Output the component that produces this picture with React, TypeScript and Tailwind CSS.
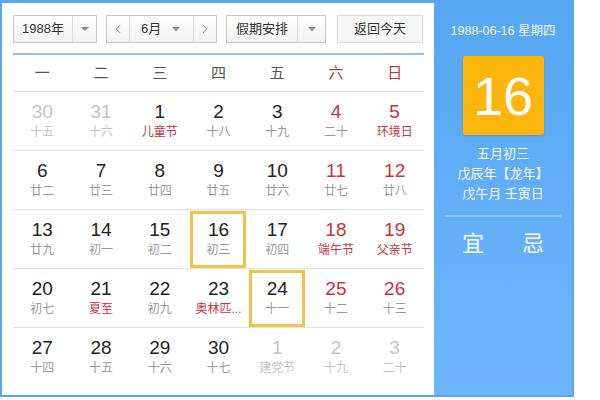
import { ChevronLeft, ChevronRight } from "lucide-react";

type Day = {
  n: number;
  lunar: string;
  dim?: boolean;
  redNum?: boolean;
  redLunar?: boolean;
  selected?: boolean;
};

const weeks: Day[][] = [
  [
    { n: 30, lunar: "十五", dim: true },
    { n: 31, lunar: "十六", dim: true },
    { n: 1, lunar: "儿童节", redLunar: true },
    { n: 2, lunar: "十八" },
    { n: 3, lunar: "十九" },
    { n: 4, lunar: "二十", redNum: true },
    { n: 5, lunar: "环境日", redNum: true, redLunar: true },
  ],
  [
    { n: 6, lunar: "廿二" },
    { n: 7, lunar: "廿三" },
    { n: 8, lunar: "廿四" },
    { n: 9, lunar: "廿五" },
    { n: 10, lunar: "廿六" },
    { n: 11, lunar: "廿七", redNum: true },
    { n: 12, lunar: "廿八", redNum: true },
  ],
  [
    { n: 13, lunar: "廿九" },
    { n: 14, lunar: "初一" },
    { n: 15, lunar: "初二" },
    { n: 16, lunar: "初三", selected: true },
    { n: 17, lunar: "初四" },
    { n: 18, lunar: "端午节", redNum: true, redLunar: true },
    { n: 19, lunar: "父亲节", redNum: true, redLunar: true },
  ],
  [
    { n: 20, lunar: "初七" },
    { n: 21, lunar: "夏至", redLunar: true },
    { n: 22, lunar: "初九" },
    { n: 23, lunar: "奥林匹...", redLunar: true },
    { n: 24, lunar: "十一", selected: true },
    { n: 25, lunar: "十二", redNum: true },
    { n: 26, lunar: "十三", redNum: true },
  ],
  [
    { n: 27, lunar: "十四" },
    { n: 28, lunar: "十五" },
    { n: 29, lunar: "十六" },
    { n: 30, lunar: "十七" },
    { n: 1, lunar: "建党节", dim: true },
    { n: 2, lunar: "十九", dim: true },
    { n: 3, lunar: "二十", dim: true },
  ],
];

const weekdays = ["一", "二", "三", "四", "五", "六", "日"];

const Caret = () => (
  <span className="w-0 h-0 border-l-[4px] border-r-[4px] border-t-[4px] border-l-transparent border-r-transparent border-t-[#888]" />
);

const DayCell = ({ day }: { day: Day }) => {
  const numColor = day.dim ? "text-[#c4c4c4]" : day.redNum ? "text-[#c8323c]" : "text-[#222]";
  const lunarColor = day.dim
    ? "text-[#c4c4c4]"
    : day.redLunar
      ? "text-[#c8323c]"
      : "text-[#999]";
  return (
    <div className="h-[58px] flex items-center justify-center">
      <div
        className={
          day.selected
            ? "w-[56px] h-[57px] border-[3px] border-[#f2c33f] flex flex-col items-center justify-center"
            : "w-[56px] h-[57px] flex flex-col items-center justify-center"
        }
      >
        <span className={`text-[19px] leading-[22px] font-['Liberation_Sans',sans-serif] ${numColor}`}>
          {day.n}
        </span>
        <span className={`text-[12px] leading-[18px] whitespace-nowrap ${lunarColor}`}>{day.lunar}</span>
      </div>
    </div>
  );
};

export default function App() {
  return (
    <div className="w-[600px] h-[400px] bg-white font-['Liberation_Sans','Noto_Sans_CJK_SC',sans-serif]">
      <div className="w-[574px] h-[397px] border-[2px] border-t-[3px] border-[#5aa6ee] flex">
        {/* Calendar */}
        <div className="flex-1 bg-white pl-[11px] pr-[10px] pt-[12px]">
          {/* Controls */}
          <div className="flex items-center h-[28px] text-[13px] text-[#333]">
            <div className="flex h-full border border-[#c8c8c8] bg-gradient-to-b from-white to-[#f2f2f2]">
              <div className="w-[58px] flex items-center justify-center">1988年</div>
              <div className="w-[24px] border-l border-[#ddd] flex items-center justify-center">
                <Caret />
              </div>
            </div>
            <div className="ml-[9px] flex h-full border border-[#c8c8c8] bg-gradient-to-b from-white to-[#f2f2f2]">
              <div className="w-[23px] border-r border-[#ddd] flex items-center justify-center text-[#777]">
                <ChevronLeft size={14} strokeWidth={1.5} />
              </div>
              <div className="w-[63px] flex items-center justify-between pl-[11px] pr-[13px]">
                <span>6月</span>
                <Caret />
              </div>
              <div className="w-[23px] border-l border-[#ddd] flex items-center justify-center text-[#777]">
                <ChevronRight size={14} strokeWidth={1.5} />
              </div>
            </div>
            <div className="ml-[9px] flex h-full border border-[#c8c8c8] bg-gradient-to-b from-white to-[#f2f2f2]">
              <div className="w-[70px] flex items-center justify-center">假期安排</div>
              <div className="w-[28px] border-l border-[#ddd] flex items-center justify-center">
                <Caret />
              </div>
            </div>
            <div className="ml-[11px] w-[86px] h-full border border-[#d8d8d8] bg-[#f6f6f6] flex items-center justify-center">
              返回今天
            </div>
          </div>

          {/* Weekday header */}
          <div className="mt-[10px] border-t-[2px] border-[#8cc2ec] border-b border-b-[#dedede] grid grid-cols-7 h-[39px] items-center">
            {weekdays.map((w, i) => (
              <div
                key={w}
                className={`text-center text-[15px] ${i >= 5 ? "text-[#c8323c]" : "text-[#555]"}`}
              >
                {w}
              </div>
            ))}
          </div>

          {/* Days */}
          {weeks.map((week, wi) => (
            <div
              key={wi}
              className={`grid grid-cols-7 ${wi < weeks.length - 1 ? "border-b border-[#e2e2e2]" : ""}`}
            >
              {week.map((d, di) => (
                <DayCell key={di} day={d} />
              ))}
            </div>
          ))}
        </div>

        {/* Side panel */}
        <div className="w-[138px] bg-gradient-to-b from-[#56a6f1] to-[#6db6fd] flex flex-col items-center text-white">
          <div className="mt-[20px] text-[12.5px] leading-[16px] text-[#eef6ff]">1988-06-16 星期四</div>
          <div className="mt-[17px] w-[81px] h-[79px] bg-[#ffb60c] rounded-[2px] flex items-center justify-center shadow-[0_1px_2px_rgba(0,0,0,0.15)]">
            <span className="text-[54px] leading-none text-white font-['Liberation_Sans',sans-serif]">16</span>
          </div>
          <div className="mt-[9px] text-[13px] leading-[20px] text-center text-[#f3f8ff]">
            <div>五月初三</div>
            <div>戊辰年【龙年】</div>
            <div>戊午月 壬寅日</div>
          </div>
          <div className="mt-[11px] w-[116px] h-[2px] bg-[#8cc6f8]" />
          <div className="mt-[12px] flex gap-[38px] text-[22px] leading-[30px] text-[#f5faff]">
            <span>宜</span>
            <span>忌</span>
          </div>
        </div>
      </div>
    </div>
  );
}
